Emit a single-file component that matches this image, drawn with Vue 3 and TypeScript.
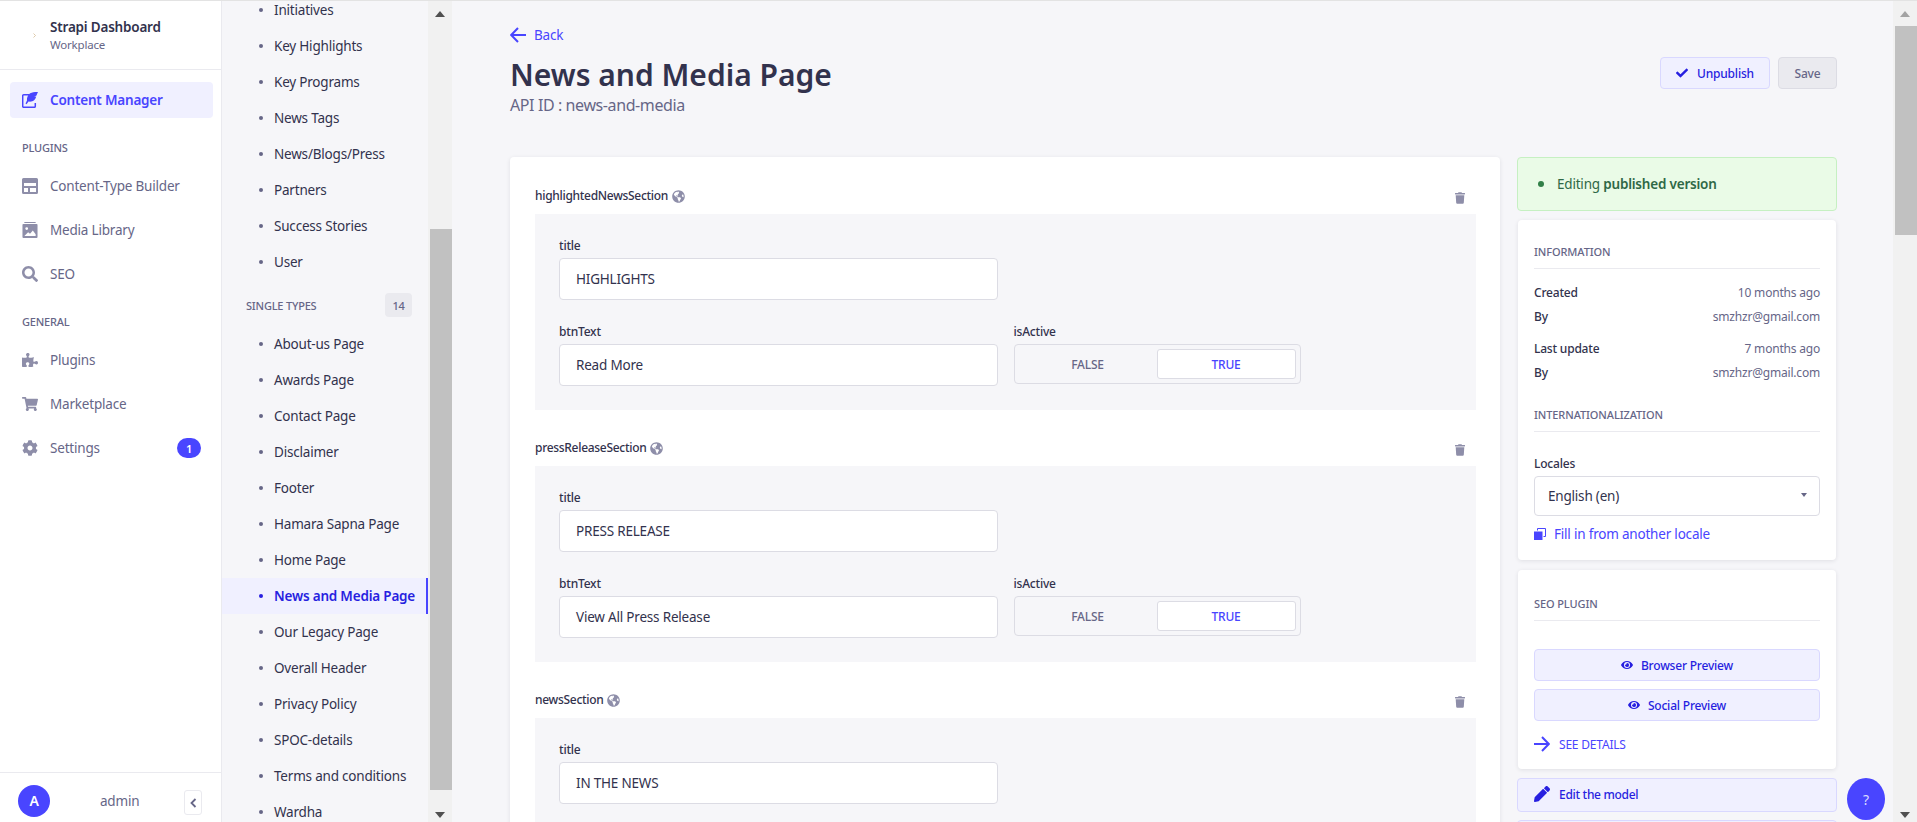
<script setup lang="ts">
interface NavItem { label: string; icon: string; badge?: string }
interface Section { name: string; title: string; btnText?: string }

const icons: Record<string, { box: string; d: string }> = {
  layout: { box: '0 0 16 16', d: 'M1.5 0h13A1.5 1.5 0 0 1 16 1.5v13a1.5 1.5 0 0 1-1.5 1.5h-13A1.5 1.5 0 0 1 0 14.5v-13A1.5 1.5 0 0 1 1.5 0zM2 5v3h12V5zm0 5v4h4v-4zm6 0v4h6v-4z' },
  media: { box: '0 0 16 17', d: 'M2 0h12v1H2zM1 2h14a1 1 0 0 1 1 1v13a1 1 0 0 1-1 1H1a1 1 0 0 1-1-1V3a1 1 0 0 1 1-1zm3.5 3.5a1.5 1.5 0 1 0 0 3 1.5 1.5 0 0 0 0-3zM2 15h12v-2l-3-4-3 3.5-2-1.5z' },
  search: { box: '0 0 512 512', d: 'M505 442.7L405.3 343c-4.5-4.5-10.6-7-17-7H372c27.6-35.3 44-79.7 44-128C416 93.1 322.9 0 208 0S0 93.1 0 208s93.1 208 208 208c48.3 0 92.7-16.4 128-44v16.3c0 6.4 2.5 12.5 7 17l99.7 99.7c9.4 9.4 24.6 9.4 33.9 0l28.3-28.3c9.4-9.4 9.4-24.6.1-34zM208 336c-70.7 0-128-57.2-128-128 0-70.7 57.2-128 128-128 70.7 0 128 57.2 128 128 0 70.7-57.2 128-128 128z' },
  puzzle: { box: '0 0 576 512', d: 'M519.442 288.651c-41.519 0-59.5 31.593-82.058 31.593C377.409 320.244 432 144 432 144s-196.288 80-196.288-3.297c0-35.827 36.288-46.25 36.288-85.985C272 19.216 243.885 0 210.539 0c-34.654 0-66.366 18.891-66.366 56.346 0 41.364 31.711 59.277 31.711 81.75C175.885 207.719 0 166.758 0 166.758v333.237s178.635 41.047 178.635-28.662c0-22.473-40-40.107-40-81.471 0-37.456 29.25-56.346 63.577-56.346 33.673 0 61.788 19.216 61.788 54.717 0 39.735-36.288 50.158-36.288 85.985 0 60.803 129.675 25.73 181.23 25.73 0 0-34.725-120.101 25.827-120.101 35.962 0 46.423 36.152 86.308 36.152C556.712 416 576 387.99 576 354.443c0-34.199-18.962-65.792-56.558-65.792z' },
  cart: { box: '0 0 576 512', d: 'M528.12 301.319l47.273-208C578.806 78.301 567.391 64 551.99 64H159.208l-9.166-44.81C147.758 8.021 137.93 0 126.529 0H24C10.745 0 0 10.745 0 24v16c0 13.255 10.745 24 24 24h69.883l70.248 343.435C147.325 417.1 136 435.222 136 456c0 30.928 25.072 56 56 56s56-25.072 56-56c0-15.674-6.447-29.835-16.824-40h209.647C430.447 426.165 424 440.326 424 456c0 30.928 25.072 56 56 56s56-25.072 56-56c0-22.172-12.888-41.332-31.579-50.405l5.517-24.276c3.413-15.018-8.002-29.319-23.403-29.319H218.117l-6.545-32h293.145c11.206 0 20.92-7.754 23.403-18.681z' },
  cog: { box: '0 0 512 512', d: 'M487.4 315.7l-42.6-24.6c4.3-23.2 4.3-47 0-70.2l42.6-24.6c4.9-2.8 7.1-8.6 5.5-14-11.1-35.6-30-67.8-54.7-94.6-3.8-4.1-10-5.1-14.8-2.3L380.8 110c-17.9-15.4-38.5-27.3-60.8-35.1V25.8c0-5.6-3.9-10.5-9.4-11.7-36.7-8.2-74.3-7.8-109.2 0-5.5 1.2-9.4 6.1-9.4 11.7V75c-22.2 7.9-42.8 19.8-60.8 35.1L88.7 85.5c-4.9-2.8-11-1.9-14.8 2.3-24.7 26.7-43.6 58.9-54.7 94.6-1.7 5.4.6 11.2 5.5 14L67.3 221c-4.3 23.2-4.3 47 0 70.2l-42.6 24.6c-4.9 2.8-7.1 8.6-5.5 14 11.1 35.6 30 67.8 54.7 94.6 3.8 4.1 10 5.1 14.8 2.3l42.6-24.6c17.9 15.4 38.5 27.3 60.8 35.1v49.2c0 5.6 3.9 10.5 9.4 11.7 36.7 8.2 74.3 7.8 109.2 0 5.5-1.2 9.4-6.1 9.4-11.7v-49.2c22.2-7.9 42.8-19.8 60.8-35.1l42.6 24.6c4.9 2.8 11 1.9 14.8-2.3 24.7-26.7 43.6-58.9 54.7-94.6 1.5-5.5-.7-11.3-5.6-14.1zM256 336c-44.1 0-80-35.9-80-80s35.9-80 80-80 80 35.9 80 80-35.9 80-80 80z' },
}

const pluginNav: NavItem[] = [
  { label: 'Content-Type Builder', icon: 'layout' },
  { label: 'Media Library', icon: 'media' },
  { label: 'SEO', icon: 'search' },
]
const generalNav: NavItem[] = [
  { label: 'Plugins', icon: 'puzzle' },
  { label: 'Marketplace', icon: 'cart' },
  { label: 'Settings', icon: 'cog', badge: '1' },
]
const collectionTypes = ['Initiatives', 'Key Highlights', 'Key Programs', 'News Tags', 'News/Blogs/Press', 'Partners', 'Success Stories', 'User']
const singleTypes = ['About-us Page', 'Awards Page', 'Contact Page', 'Disclaimer', 'Footer', 'Hamara Sapna Page', 'Home Page', 'News and Media Page', 'Our Legacy Page', 'Overall Header', 'Privacy Policy', 'SPOC-details', 'Terms and conditions', 'Wardha']
const activeType = 'News and Media Page'

const sections: Section[] = [
  { name: 'highlightedNewsSection', title: 'HIGHLIGHTS', btnText: 'Read More' },
  { name: 'pressReleaseSection', title: 'PRESS RELEASE', btnText: 'View All Press Release' },
  { name: 'newsSection', title: 'IN THE NEWS' },
]
const globe = 'M248 8C111.03 8 0 119.03 0 256s111.03 248 248 248 248-111.03 248-248S384.97 8 248 8zm82.29 357.6c-3.9 3.88-7.99 7.95-11.31 11.28-2.99 3-5.1 6.7-6.17 10.71-1.51 5.66-2.73 11.38-4.77 16.87l-17.39 46.85c-13.76 3-28 4.69-42.65 4.69v-27.38c1.69-12.62-7.64-36.26-22.63-51.25-6-6-9.37-14.14-9.37-22.63v-32.01c0-11.64-6.27-22.34-16.46-27.97-14.37-7.95-34.81-19.06-48.81-26.11-11.48-5.78-22.1-13.14-31.65-21.75l-.8-.72a114.792 114.792 0 0 1-18.06-20.74c-9.38-13.77-24.66-36.42-34.59-51.14 20.47-45.5 57.36-82.04 103.2-101.89l24.01 12.01C203.48 89.74 216 82.01 216 70.11v-11.3c7.99-1.29 16.12-2.11 24.39-2.42l28.3 28.3c6.25 6.25 6.25 16.38 0 22.63L264 112l-10.34 10.34c-3.12 3.12-3.12 8.19 0 11.31l4.69 4.69c3.12 3.12 3.12 8.19 0 11.31l-8 8a8.008 8.008 0 0 1-5.66 2.34h-8.99c-2.08 0-4.08.81-5.58 2.27l-9.92 9.65a8.008 8.008 0 0 0-1.58 9.31l15.59 31.19c2.66 5.32-1.21 11.58-7.15 11.58h-5.64c-1.93 0-3.79-.7-5.24-1.96l-9.28-8.06a16.017 16.017 0 0 0-15.55-3.1l-31.17 10.39a11.95 11.95 0 0 0-8.17 11.34c0 4.53 2.56 8.66 6.61 10.69l11.08 5.54c9.41 4.71 19.79 7.16 30.31 7.16s22.59 27.29 32 32h66.75c8.49 0 16.62 3.37 22.63 9.37l13.69 13.69a30.503 30.503 0 0 1 8.93 21.57 46.536 46.536 0 0 1-13.72 32.98zM417 274.25c-5.79-1.45-10.84-5-14.15-9.97l-17.98-26.97a23.97 23.97 0 0 1 0-26.62l19.59-29.38c2.32-3.47 5.5-6.29 9.24-8.15l12.98-6.49C440.2 193.59 448 223.87 448 256c0 8.67-.74 17.16-1.82 25.54L417 274.25z'
const trash = 'M432 32H312l-9.4-18.7A24 24 0 0 0 281.1 0H166.8a23.72 23.72 0 0 0-21.4 13.3L136 32H16A16 16 0 0 0 0 48v32a16 16 0 0 0 16 16h416a16 16 0 0 0 16-16V48a16 16 0 0 0-16-16zM53.2 467a48 48 0 0 0 47.9 45h245.8a48 48 0 0 0 47.9-45L416 128H32z'
const eye = 'M572.52 241.4C518.29 135.59 410.93 64 288 64S57.68 135.64 3.48 241.41a32.35 32.35 0 0 0 0 29.19C57.71 376.41 165.07 448 288 448s230.32-71.64 284.52-177.41a32.35 32.35 0 0 0 0-29.19zM288 400a144 144 0 1 1 144-144 143.93 143.93 0 0 1-144 144zm0-240a95.31 95.31 0 0 0-25.31 3.79 47.85 47.85 0 0 1-66.9 66.9A95.78 95.78 0 1 0 288 160z'
</script>

<template>
  <div class="app">
    <aside class="nav">
      <header class="brand">
        <svg width="3" height="5" viewBox="0 0 3 5"><path d="M.5.5l2 2-2 2" fill="none" stroke="#d6bd96" stroke-width=".8" /></svg>
        <div>
          <div class="brand-name">Strapi Dashboard</div>
          <div class="brand-sub">Workplace</div>
        </div>
      </header>
      <div class="nav-body">
        <a class="nav-item active">
          <svg class="nav-icon" viewBox="0 0 16 16"><path fill="none" stroke="#4945ff" stroke-width="1.5" d="M7 2.800H1.700a1 1 0 0 0-1 1v10.500a1 1 0 0 0 1 1h10.600a1 1 0 0 0 1-1V11" /><path fill="#4945ff" d="M16 0c-3.500-.2-7 .2-9 2.200C5.200 4 4.800 6.700 5 8.500L3.500 11.500l1 .7 2-2.700c2 .4 4.300-.1 5.900-1.500 1-1 1.600-2.200 1.800-3.500l-2 .3 2.300-1.300C15 2 15.600 1 16 0z" /></svg>
          <span>Content Manager</span>
        </a>
        <div class="nav-title">PLUGINS</div>
        <a v-for="n in pluginNav" :key="n.label" class="nav-item">
          <svg class="nav-icon" :viewBox="icons[n.icon].box"><path fill-rule="evenodd" :d="icons[n.icon].d" /></svg>
          <span>{{ n.label }}</span>
        </a>
        <div class="nav-title">GENERAL</div>
        <a v-for="n in generalNav" :key="n.label" class="nav-item">
          <svg class="nav-icon" :viewBox="icons[n.icon].box"><path fill-rule="evenodd" :d="icons[n.icon].d" /></svg>
          <span>{{ n.label }}</span>
          <b v-if="n.badge" class="nav-badge">{{ n.badge }}</b>
        </a>
      </div>
      <footer class="user">
        <span class="avatar">A</span>
        <span class="user-name">admin</span>
        <button class="collapse" aria-label="Collapse">
          <svg width="7" height="10" viewBox="0 0 7 10"><path d="M5.500 1 1.500 5l4 4" fill="none" stroke="#666687" stroke-width="1.800" /></svg>
        </button>
      </footer>
    </aside>

    <section class="subnav">
      <div class="types">
        <ul class="type-list scrolled">
          <li v-for="t in collectionTypes" :key="t" class="type"><i></i>{{ t }}</li>
        </ul>
        <div class="types-head">
          <span>SINGLE TYPES</span>
          <b>14</b>
        </div>
        <ul class="type-list">
          <li v-for="t in singleTypes" :key="t" class="type" :class="{ current: t === activeType }"><i></i>{{ t }}</li>
        </ul>
      </div>
      <div class="scrollbar sub-scroll">
        <span class="arrow up"></span>
        <div class="thumb"></div>
        <span class="arrow down"></span>
      </div>
    </section>

    <main class="main">
      <div class="page">
        <a class="back">
          <svg width="16" height="16" viewBox="0 0 16 16"><path d="M16 8H1.500M8 1 1.200 8 8 15" fill="none" stroke="#4945ff" stroke-width="2" /></svg>
          <span>Back</span>
        </a>
        <div class="page-head">
          <div>
            <h1>News and Media Page</h1>
            <p>API ID : news-and-media</p>
          </div>
          <div class="actions">
            <button class="btn unpublish">
              <svg width="12" height="10" viewBox="0 0 512 400"><path fill="#271fe0" d="M173.900 383.400 7.500 217c-10-10-10-26.200 0-36.200l36.200-36.200c10-10 26.200-10 36.200 0L192 256.700 432.100 16.600c10-10 26.200-10 36.200 0l36.200 36.200c10 10 10 26.200 0 36.200l-294.400 294.400c-10 10-26.200 10-36.200 0z" /></svg>
              Unpublish
            </button>
            <button class="btn save">Save</button>
          </div>
        </div>

        <div class="columns">
          <div class="card form">
            <div v-for="s in sections" :key="s.name" class="group">
              <div class="group-head">
                <span class="group-name">{{ s.name }}</span>
                <svg class="globe" viewBox="0 0 496 512"><path fill="#8e8ea9" :d="globe" /></svg>
                <svg class="trash" viewBox="0 0 448 512"><path fill="#8e8ea9" :d="trash" /></svg>
              </div>
              <div class="group-body">
                <div class="grid">
                  <div class="field">
                    <label>title</label>
                    <div class="input">{{ s.title }}</div>
                  </div>
                  <div></div>
                  <template v-if="s.btnText">
                    <div class="field">
                      <label>btnText</label>
                      <div class="input">{{ s.btnText }}</div>
                    </div>
                    <div class="field">
                      <label>isActive</label>
                      <div class="toggle">
                        <span>FALSE</span>
                        <span class="on">TRUE</span>
                      </div>
                    </div>
                  </template>
                </div>
              </div>
            </div>
          </div>

          <div class="side">
            <div class="alert"><i></i><span>Editing <b>published version</b></span></div>
            <div class="card info">
              <div class="side-title">INFORMATION</div>
              <dl>
                <div class="row first"><dt>Created</dt><dd>10 months ago</dd></div>
                <div class="row"><dt>By</dt><dd>smzhzr@gmail.com</dd></div>
                <div class="row first"><dt>Last update</dt><dd>7 months ago</dd></div>
                <div class="row"><dt>By</dt><dd>smzhzr@gmail.com</dd></div>
              </dl>
              <div class="side-title intl">INTERNATIONALIZATION</div>
              <div class="locales">Locales</div>
              <div class="select">English (en)<span class="caret"></span></div>
              <a class="fill">
                <svg width="12" height="12" viewBox="0 0 12 12"><path fill="#4945ff" d="M0 3.500h8.500V12H0z" /><path fill="none" stroke="#4945ff" stroke-width="1" d="M3.500 2.500V.5h8v8H9.500" /></svg>
                Fill in from another locale
              </a>
            </div>
            <div class="card seo">
              <div class="side-title">SEO PLUGIN</div>
              <button class="seo-btn">
                <svg width="12" height="12" viewBox="0 0 576 512"><path fill="#271fe0" :d="eye" /></svg>
                Browser Preview
              </button>
              <button class="seo-btn">
                <svg width="12" height="12" viewBox="0 0 576 512"><path fill="#271fe0" :d="eye" /></svg>
                Social Preview
              </button>
              <a class="details">
                <svg width="16" height="16" viewBox="0 0 16 16"><path d="M0 8h14.500M8 1l6.800 7L8 15" fill="none" stroke="#4945ff" stroke-width="2" /></svg>
                SEE DETAILS
              </a>
            </div>
            <button class="edit">
              <svg width="16" height="16" viewBox="0 0 512 512"><path fill="#271fe0" d="M497.900 142.100l-46.100 46.100c-4.700 4.700-12.300 4.700-17 0l-111-111c-4.700-4.700-4.700-12.300 0-17l46.100-46.100c18.700-18.700 49.100-18.700 67.900 0l60.100 60.100c18.800 18.700 18.800 49.100 0 67.900zM284.200 99.800L21.600 362.400.4 483.900c-2.900 16.400 11.400 30.600 27.800 27.800l121.500-21.300 262.600-262.600c4.700-4.700 4.700-12.300 0-17l-111-111c-4.800-4.700-12.400-4.700-17.100 0z" /></svg>
              Edit the model
            </button>
            <button class="edit"></button>
          </div>
        </div>
      </div>
      <div class="scrollbar main-scroll">
        <span class="arrow up light"></span>
        <div class="thumb"></div>
        <span class="arrow down"></span>
      </div>
      <button class="help">?</button>
    </main>
  </div>
</template>

<style>
html, body { margin: 0; height: 100%; overflow: hidden; }
</style>

<style scoped>
.app {
  display: flex;
  height: 822px;
  box-sizing: border-box;
  overflow: hidden;
  border-top: 1px solid #e3e3e3;
  background: #f6f6f9;
  color: #32324d;
  font-family: "Noto Sans", "Open Sans", sans-serif;
  font-size: 13.5px;
  letter-spacing: -0.2px;
}
ul { list-style: none; margin: 0; padding: 0; }
button { font: inherit; letter-spacing: inherit; cursor: pointer; }
svg { flex: none; display: block; }

/* main navigation */
.nav {
  width: 222px;
  flex: none;
  box-sizing: border-box;
  background: #fff;
  border-right: 1px solid #eaeaef;
  display: flex;
  flex-direction: column;
}
.brand {
  height: 68px;
  flex: none;
  border-bottom: 1px solid #eaeaef;
  display: flex;
  align-items: center;
  padding-left: 33px;
  gap: 14px;
}
.brand-name { font-size: 13.5px; font-weight: 600; line-height: 18px; }
.brand-sub { font-size: 11.5px; color: #666687; line-height: 16px; margin-top: 1px; }
.nav-body { flex: 1; padding: 12px 8px 0 10px; }
.nav-item {
  display: flex;
  align-items: center;
  height: 36px;
  padding: 0 12px;
  gap: 12px;
  border-radius: 4px;
  color: #666687;
  margin-bottom: 8px;
  fill: #8e8ea9;
}
.nav-item.active {
  background: #f0f0ff;
  color: #4945ff;
  font-weight: 600;
  margin-bottom: 0;
}
.nav-icon { width: 16px; height: 16px; }
.nav-title {
  font-size: 11px;
  font-weight: 500;
  color: #666687;
  line-height: 16px;
  padding-left: 12px;
  margin: 22px 0 12px;
}
.nav-badge {
  margin-left: auto;
  width: 24px;
  height: 20px;
  border-radius: 10px;
  background: #4945ff;
  color: #fff;
  font-size: 11px;
  font-weight: 600;
  display: flex;
  align-items: center;
  justify-content: center;
}
.user {
  height: 50px;
  padding-top: 6px;
  box-sizing: border-box;
  flex: none;
  border-top: 1px solid #eaeaef;
  display: flex;
  align-items: center;
  padding-left: 18px;
}
.avatar {
  width: 32px;
  height: 32px;
  border-radius: 50%;
  background: #4945ff;
  color: #fff;
  font-size: 14px;
  font-weight: 600;
  display: flex;
  align-items: center;
  justify-content: center;
}
.user-name { margin-left: 50px; color: #666687; }
.collapse {
  margin-left: 45px;
  margin-top: 4px;
  width: 18px;
  height: 25px;
  padding: 0;
  background: #fff;
  border: 1px solid #eaeaef;
  border-radius: 3px;
  display: flex;
  align-items: center;
  justify-content: center;
}

/* collection list */
.subnav {
  width: 230px;
  flex: none;
  display: flex;
  overflow: hidden;
  background: #f6f6f9;
}
.types { width: 206px; flex: none; }
.type-list.scrolled { margin-top: -9px; }
.type {
  height: 36px;
  display: flex;
  align-items: center;
  padding-left: 37px;
  gap: 11px;
  white-space: nowrap;
  color: #32324d;
  box-sizing: border-box;
}
.type i {
  width: 4px;
  height: 4px;
  border-radius: 50%;
  background: #666687;
  flex: none;
}
.type.current {
  background: #f0f0ff;
  color: #271fe0;
  font-weight: 600;
  border-right: 2px solid #4945ff;
}
.type.current i { background: #271fe0; }
.types-head {
  height: 46px;
  box-sizing: border-box;
  padding: 13px 16px 0 24px;
  display: flex;
  align-items: flex-start;
  justify-content: space-between;
}
.types-head span { font-size: 11px; font-weight: 500; color: #666687; line-height: 24px; padding-top: 1px; }
.types-head b {
  width: 27px;
  height: 24px;
  border-radius: 4px;
  background: #eaeaef;
  color: #666687;
  font-size: 11px;
  font-weight: 500;
  display: flex;
  align-items: center;
  justify-content: center;
}

/* browser scrollbars */
.scrollbar {
  background: #f1f1f1;
  position: relative;
}
.sub-scroll { width: 24px; margin-top: -1px; }
.sub-scroll .thumb { position: absolute; top: 229px; left: 2px; right: 0; height: 561px; background: #c1c1c1; }
.arrow { position: absolute; left: 50%; margin-left: -5px; width: 0; height: 0; border-left: 5.5px solid transparent; border-right: 5.5px solid transparent; }
.arrow.up { top: 11px; border-bottom: 6px solid #505050; }
.arrow.down { bottom: 4px; border-top: 6px solid #505050; }
.arrow.up.light { border-bottom-color: #a3a3a3; }

/* main */
.main { flex: 1; min-width: 0; display: flex; position: relative; }
.page { flex: 1; min-width: 0; padding: 24px 56px 0 58px; box-sizing: border-box; overflow: hidden; }
.main-scroll { width: 24px; flex: none; margin-top: -1px; }
.main-scroll .thumb { position: absolute; top: 26px; left: 2px; right: 0; height: 209px; background: #c1c1c1; }
.back { display: flex; align-items: center; gap: 8px; height: 20px; color: #4945ff; }
.page-head { display: flex; justify-content: space-between; align-items: flex-start; margin-top: 10px; height: 102px; }
h1 { margin: 0; font-size: 30px; line-height: 40px; font-weight: 600; letter-spacing: 0; }
.page-head p { margin: 0; font-size: 16px; line-height: 20px; color: #666687; letter-spacing: -0.4px; }
.actions { display: flex; gap: 8px; margin-top: 2px; }
.btn {
  height: 32px;
  border-radius: 4px;
  font-size: 12px;
  font-weight: 500;
  display: flex;
  align-items: center;
  padding: 0;
  justify-content: center;
  box-sizing: border-box;
}
.unpublish { width: 110px; background: #f0f0ff; border: 1px solid #d9d8ff; color: #271fe0; gap: 9px; }
.save { width: 59px; background: #eaeaef; border: 1px solid #dcdce4; color: #666687; }

.columns { display: flex; gap: 17px; align-items: flex-start; }
.card { background: #fff; border-radius: 4px; box-shadow: 0 1px 4px rgba(33, 33, 52, 0.1); box-sizing: border-box; }
.form { width: 990px; flex: none; padding: 25px 24px 24px 25px; display: flex; flex-direction: column; gap: 24px; }
.group-head { display: flex; align-items: center; height: 28px; margin-bottom: 4px; gap: 4px; }
.group-name { font-size: 12px; font-weight: 500; line-height: 16px; letter-spacing: -0.3px; }
.globe { width: 13px; height: 13px; }
.trash { width: 10px; height: 12px; margin-left: auto; margin-right: 11px; margin-top: 4px; }
.group-body { background: #f6f6f9; padding: 24px; }
.grid { display: grid; grid-template-columns: 1fr 1fr; column-gap: 16px; row-gap: 24px; }
.field label { display: block; font-size: 12px; font-weight: 500; line-height: 16px; margin-bottom: 4px; }
.input {
  height: 42px;
  box-sizing: border-box;
  background: #fff;
  border: 1px solid #dcdce4;
  border-radius: 4px;
  padding: 0 16px;
  display: flex;
  align-items: center;
}
.toggle {
  width: 287px;
  height: 40px;
  box-sizing: border-box;
  background: #f6f6f9;
  border: 1px solid #dcdce4;
  border-radius: 4px;
  padding: 4px;
  display: grid;
  grid-template-columns: 1fr 139px;
  font-size: 12px;
  font-weight: 500;
  color: #666687;
}
.toggle span { display: flex; align-items: center; justify-content: center; border-radius: 3px; border: 1px solid transparent; }
.toggle .on { background: #fff; border-color: #dcdce4; color: #4945ff; }

.side { width: 320px; flex: none; display: flex; flex-direction: column; }
.alert {
  height: 54px;
  box-sizing: border-box;
  background: #eafbe7;
  border: 1px solid #c6f0c2;
  border-radius: 4px;
  display: flex;
  align-items: center;
  padding-left: 20px;
  gap: 13px;
  color: #2f6846;
}
.alert i { width: 6px; height: 6px; border-radius: 50%; background: #328048; }
.alert b { font-weight: 600; }
.info { margin: 9px 1px 0; padding: 24px 16px 18px; height: 340px; }
.side-title {
  font-size: 11px;
  font-weight: 500;
  line-height: 16px;
  color: #666687;
  letter-spacing: -0.1px;
  padding-bottom: 8px;
  border-bottom: 1px solid #eaeaef;
}
dl { margin: 0; }
.row { display: flex; justify-content: space-between; font-size: 12px; line-height: 16px; margin-top: 8px; }
.row.first { margin-top: 16px; }
dt { font-weight: 500; color: #32324d; }
dd { margin: 0; color: #666687; }
.intl { margin-top: 26px; }
.locales { margin-top: 24px; font-size: 12px; font-weight: 500; line-height: 16px; }
.select {
  margin-top: 4px;
  height: 40px;
  box-sizing: border-box;
  border: 1px solid #dcdce4;
  border-radius: 4px;
  display: flex;
  align-items: center;
  justify-content: space-between;
  padding: 0 12px 0 13px;
}
.caret { width: 0; height: 0; border-left: 3.5px solid transparent; border-right: 3.5px solid transparent; border-top: 4px solid #666687; margin-top: -2px; }
.fill { display: flex; align-items: center; gap: 8px; margin-top: 10px; height: 16px; color: #4945ff; }
.seo { margin: 10px 1px 0; padding: 26px 16px 17px; height: 199px; }
.seo-btn {
  width: 100%;
  height: 32px;
  box-sizing: border-box;
  background: #f0f0ff;
  border: 1px solid #d9d8ff;
  border-radius: 4px;
  color: #271fe0;
  font-size: 12px;
  font-weight: 500;
  display: flex;
  align-items: center;
  justify-content: center;
  gap: 8px;
  margin-top: 8px;
}
.side-title + .seo-btn { margin-top: 28px; }
.details { display: flex; align-items: center; gap: 9px; margin-top: 15px; height: 16px; color: #4945ff; font-size: 12px; }
.edit {
  flex: none;
  height: 34px;
  box-sizing: border-box;
  background: #f0f0ff;
  border: 1px solid #d9d8ff;
  border-radius: 4px;
  margin-top: 9px;
  display: flex;
  align-items: center;
  gap: 9px;
  padding: 0 16px 2px;
  color: #271fe0;
  font-size: 12px;
  font-weight: 500;
  letter-spacing: -0.3px;
}
.edit + .edit { margin-top: 8px; }
.help {
  position: absolute;
  right: 32px;
  bottom: 2px;
  width: 38px;
  height: 42px;
  border: 0;
  padding: 0;
  border-radius: 50%;
  background: #4945ff;
  color: #dcdcff;
  font-size: 14px;
}
</style>
